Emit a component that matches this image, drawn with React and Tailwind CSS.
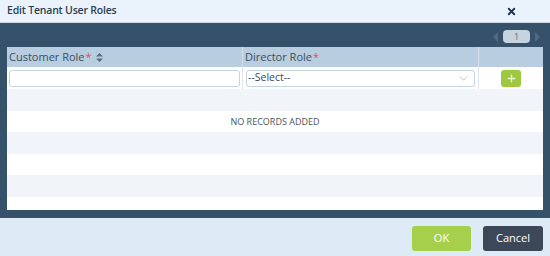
import { ChevronDown, Plus, X } from 'lucide-react';

function EditTenantUserRoles() {
  const stripes = [true, false, true, false, true, false];

  return (
    <div className="w-[550px] h-[256px] overflow-hidden bg-[#dcebf6] font-['Open_Sans',sans-serif]">
      {/* Title bar */}
      <div className="h-[23px] bg-[#eaf3fb] border-b border-[#c9d8e4] flex items-center justify-between pl-[7px] pr-[33px]">
        <span className="text-[10.5px] font-semibold text-[#2b3d50] tracking-[-0.2px]">Edit Tenant User Roles</span>
        <X className="w-[11px] h-[11px] text-[#1e3550]" strokeWidth={4} />
      </div>

      {/* Body */}
      <div className="h-[195px] bg-[#36526a] px-[7px] flex flex-col">
        {/* Pager */}
        <div className="h-[24px] shrink-0 flex items-center justify-end gap-[5px] pr-[3px] pt-[3px]">
          <span className="w-0 h-0 border-y-[5px] border-y-transparent border-r-[5px] border-r-[#4f6a82]"></span>
          <span className="w-[27px] h-[13px] rounded-[4px] bg-[#c6d4e0] text-[9px] leading-[13px] text-center text-[#5e6f80]">1</span>
          <span className="w-0 h-0 border-y-[5px] border-y-transparent border-l-[5px] border-l-[#4f6a82]"></span>
        </div>

        {/* Grid */}
        <div className="h-[163px] shrink-0 bg-white flex flex-col overflow-hidden">
          <div className="h-[20px] shrink-0 bg-[#b8cde0] grid grid-cols-[236px_236px_64px] text-[11px] text-[#3a4c5e]">
            <div className="flex items-center pl-[2px] border-r border-[#d3e0eb]">
              Customer Role<span className="text-[#e0506a] ml-[1px]">*</span>
              <svg className="ml-[4px] w-[7px] h-[9px]" viewBox="0 0 7 9">
                <path d="M3.5 0 L7 3.5 H0 Z M0 5.5 H7 L3.5 9 Z" fill="#5b6b7a" />
              </svg>
            </div>
            <div className="flex items-center pl-[2px] border-r border-[#d3e0eb]">
              Director Role<span className="text-[#e0506a] ml-[1px]">*</span>
            </div>
            <div></div>
          </div>

          <div className="h-[22px] shrink-0 grid grid-cols-[236px_236px_64px] bg-white">
            <div className="flex items-center px-[2px] border-r border-[#dde6ee]">
              <div className="w-full h-[17px] border border-[#c3d3e1] rounded-[3px] bg-white"></div>
            </div>
            <div className="flex items-center px-[3px] border-r border-[#dde6ee]">
              <div className="w-full h-[17px] border border-[#c3d3e1] rounded-[3px] bg-white flex items-center justify-between pl-[1px] pr-[4px]">
                <span className="text-[10.5px] text-[#3d4a57]">--Select--</span>
                <ChevronDown className="w-[13px] h-[13px] text-[#a9b6c2]" strokeWidth={1.5} />
              </div>
            </div>
            <div className="flex items-center justify-center">
              <div className="w-[20px] h-[17px] rounded-[3px] bg-[#9cc940] flex items-center justify-center">
                <Plus className="w-[11px] h-[11px] text-[#eaf5d8]" strokeWidth={3} />
              </div>
            </div>
          </div>

          {stripes.map((light, i) => (
            <div
              key={i}
              className={`h-[21.6px] shrink-0 flex items-center justify-center text-[9px] text-[#4a535c] ${light ? 'bg-[#f1f5f9]' : 'bg-white'}`}
            >
              {i === 1 ? 'NO RECORDS ADDED' : ''}
            </div>
          ))}
        </div>
      </div>

      {/* Footer */}
      <div className="h-[38px] flex items-center justify-end gap-[12px] pr-[7px] pt-[2px]">
        <button className="w-[59px] h-[25px] rounded-[3px] bg-[#a6d04c] text-white text-[11px]">OK</button>
        <button className="w-[60px] h-[25px] rounded-[3px] bg-[#3c4858] text-white text-[11px]">Cancel</button>
      </div>
    </div>
  );
}

export default function App() {
  return <EditTenantUserRoles />;
}
